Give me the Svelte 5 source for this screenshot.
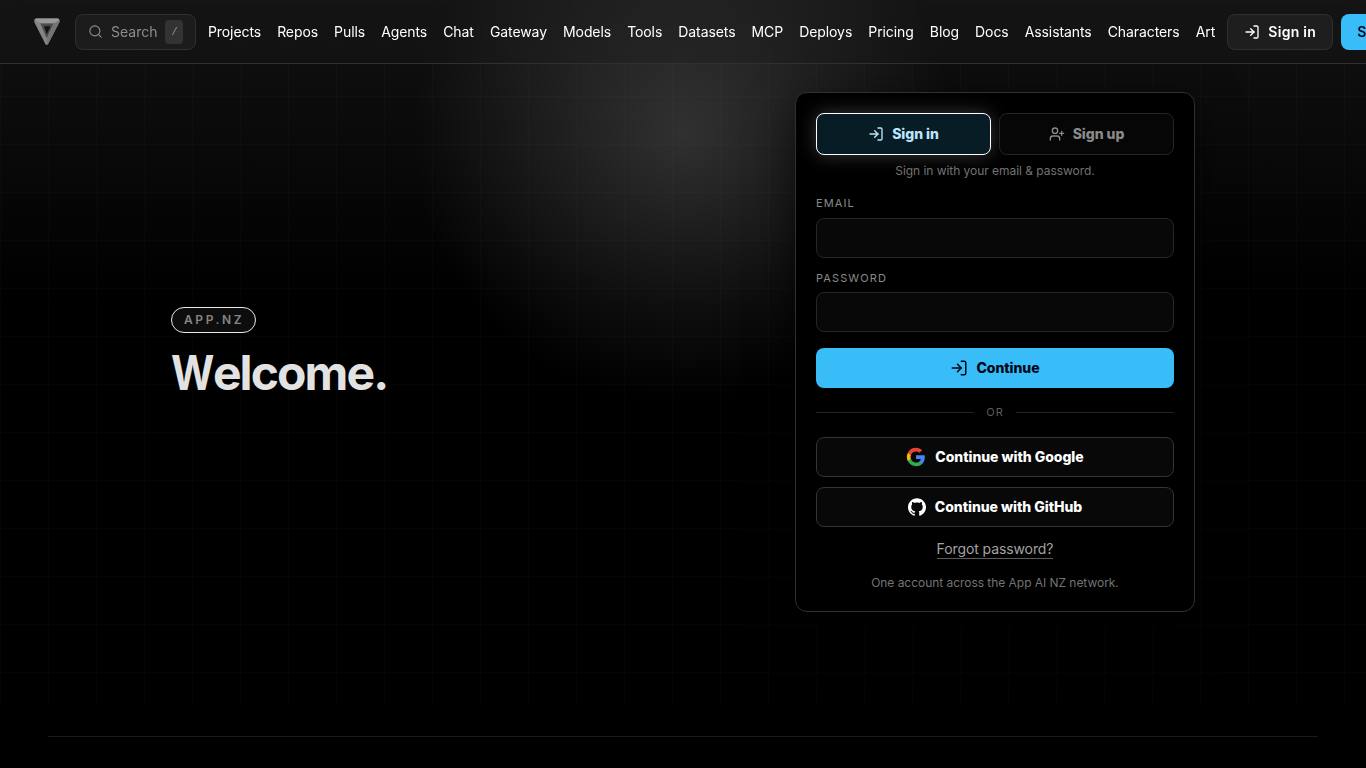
<script lang="ts">
  const links = [
    "Projects", "Repos", "Pulls", "Agents", "Chat", "Gateway", "Models", "Tools", "Datasets",
    "MCP", "Deploys", "Pricing", "Blog", "Docs", "Assistants", "Characters", "Art",
  ];

  let mode = $state<"in" | "up">("in");
  let email = $state("");
  let password = $state("");
</script>

{#snippet loginIcon(size: number)}
  <svg class="icon" width={size} height={size} viewBox="0 0 24 24" aria-hidden="true">
    <path d="M15 3h4a2 2 0 0 1 2 2v14a2 2 0 0 1-2 2h-4" />
    <path d="m10 17 5-5-5-5" />
    <path d="M15 12H3" />
  </svg>
{/snippet}

<div class="page">
  <header>
    <a class="logo" href="#home" aria-label="Home">
      <svg width="28" height="28" viewBox="0 0 28 28">
        <path d="M1.5 1.5 3 .5h22l2 2.5-12.3 23.8h-2L1.2 4z" fill="#858585" />
        <path d="M1.5 1.5 3 .5h22l1.6 1.2-5.4 3.4H7.2z" fill="#999" />
        <path d="m27 3-12.3 23.8-.9-5.3 7.2-16z" fill="#747474" />
        <path d="M7.4 5.5h13.2l-6.8 14.8z" fill="#4c4c4c" />
        <path d="M11 8.3h6.6l-3.8 8z" fill="#131313" />
      </svg>
    </a>
    <button class="search">
      <svg class="icon" width="15" height="15" viewBox="0 0 24 24" aria-hidden="true">
        <circle cx="11" cy="11" r="8" />
        <path d="m21 21-4.3-4.3" />
      </svg>
      <span>Search</span>
      <kbd>/</kbd>
    </button>
    <nav>
      {#each links as link}
        <a href={"#" + link.toLowerCase()}>{link}</a>
      {/each}
    </nav>
    <div class="account">
      <button class="btn ghost">{@render loginIcon(16)}Sign in</button>
      <button class="btn accent">Sign up</button>
    </div>
  </header>

  <main>
    <section class="intro">
      <span class="pill">APP.NZ</span>
      <h1><span class="initial">W</span>elcome.</h1>
    </section>

    <section class="card">
      <div class="tabs">
        <button class="tab" class:active={mode === "in"} onclick={() => (mode = "in")}>
          {@render loginIcon(16)}Sign in
        </button>
        <button class="tab" class:active={mode === "up"} onclick={() => (mode = "up")}>
          <svg class="icon" width="16" height="16" viewBox="0 0 24 24" aria-hidden="true">
            <path d="M16 21v-2a4 4 0 0 0-4-4H6a4 4 0 0 0-4 4v2" />
            <circle cx="9" cy="7" r="4" />
            <path d="M19 8v6M22 11h-6" />
          </svg>
          Sign up
        </button>
      </div>
      <p class="hint">Sign in with your email &amp; password.</p>

      <form onsubmit={(e) => e.preventDefault()}>
        <label>
          <span>Email</span>
          <input type="email" bind:value={email} />
        </label>
        <label>
          <span>Password</span>
          <input type="password" bind:value={password} />
        </label>
        <button class="submit">{@render loginIcon(18)}Continue</button>
      </form>

      <div class="divider"><span>OR</span></div>

      <div class="providers">
        <button class="provider">
          <svg width="20" height="20" viewBox="0 0 24 24" aria-hidden="true">
            <path fill="#4285F4" d="M22.56 12.25c0-.78-.07-1.53-.2-2.25H12v4.26h5.92a5.06 5.06 0 0 1-2.2 3.32v2.77h3.57c2.08-1.92 3.27-4.74 3.27-8.1z" />
            <path fill="#34A853" d="M12 23c2.97 0 5.46-.98 7.28-2.66l-3.57-2.77c-.98.66-2.23 1.06-3.71 1.06-2.86 0-5.29-1.93-6.16-4.53H2.18v2.84A11 11 0 0 0 12 23z" />
            <path fill="#FBBC05" d="M5.84 14.09A6.6 6.6 0 0 1 5.49 12c0-.73.13-1.43.35-2.09V7.07H2.18A11 11 0 0 0 1 12c0 1.78.43 3.45 1.18 4.93l3.66-2.84z" />
            <path fill="#EA4335" d="M12 5.38c1.62 0 3.06.56 4.21 1.64l3.15-3.15C17.45 2.09 14.97 1 12 1A11 11 0 0 0 2.18 7.07l3.66 2.84C6.71 7.31 9.14 5.38 12 5.38z" />
          </svg>
          Continue with Google
        </button>
        <button class="provider">
          <svg width="18" height="18" viewBox="0 0 24 24" aria-hidden="true">
            <path fill="currentColor" d="M12 .297c-6.63 0-12 5.373-12 12 0 5.303 3.438 9.8 8.205 11.385.6.113.82-.258.82-.577 0-.285-.01-1.04-.015-2.04-3.338.724-4.042-1.61-4.042-1.61C4.422 18.07 3.633 17.7 3.633 17.7c-1.087-.744.084-.729.084-.729 1.205.084 1.838 1.236 1.838 1.236 1.07 1.835 2.809 1.305 3.495.998.108-.776.417-1.305.76-1.605-2.665-.3-5.466-1.332-5.466-5.93 0-1.31.465-2.38 1.235-3.22-.135-.303-.54-1.523.105-3.176 0 0 1.005-.322 3.3 1.23.96-.267 1.98-.399 3-.405 1.02.006 2.04.138 3 .405 2.28-1.552 3.285-1.23 3.285-1.23.645 1.653.24 2.873.12 3.176.765.84 1.23 1.91 1.23 3.22 0 4.61-2.805 5.625-5.475 5.92.42.36.81 1.096.81 2.22 0 1.606-.015 2.896-.015 3.286 0 .315.21.69.825.57C20.565 22.092 24 17.592 24 12.297c0-6.627-5.373-12-12-12" />
          </svg>
          Continue with GitHub
        </button>
      </div>

      <a class="forgot" href="#forgot">Forgot password?</a>
      <p class="note">One account across the App AI NZ network.</p>
    </section>
  </main>

  <footer></footer>
</div>

<style>
  :global(body) {
    background: #000;
    overflow: hidden;
  }
  .page {
    height: 768px;
    box-sizing: border-box;
    overflow: hidden;
    display: flex;
    flex-direction: column;
    font-family: Inter, sans-serif;
    color: #fff;
    background:
      linear-gradient(#000, #000) 0 704px / 100% 64px no-repeat,
      linear-gradient(rgba(255, 255, 255, 0.014) 1px, transparent 1px) 0 0 / 48px 48px,
      linear-gradient(90deg, rgba(255, 255, 255, 0.014) 1px, transparent 1px) 0 0 / 48px 48px,
      radial-gradient(circle 270px at 683px 135px, rgba(255, 255, 255, 0.155), transparent),
      linear-gradient(#121212, #000 300px);
  }
  button,
  input {
    font: inherit;
    color: inherit;
    box-sizing: border-box;
  }
  button {
    cursor: pointer;
  }
  a {
    color: inherit;
    text-decoration: none;
  }
  .icon {
    fill: none;
    stroke: currentColor;
    stroke-width: 2;
    stroke-linecap: round;
    stroke-linejoin: round;
    flex-shrink: 0;
  }
  header {
    display: flex;
    align-items: center;
    flex: none;
    height: 64px;
    box-sizing: border-box;
    padding-left: 33px;
    border-bottom: 1px solid #303030;
    background: rgba(28, 28, 28, 0.3);
    backdrop-filter: blur(12px);
    white-space: nowrap;
  }
  .logo {
    display: flex;
    flex: none;
    margin-right: 14px;
  }
  .search {
    display: flex;
    align-items: center;
    flex: none;
    width: 121px;
    height: 36px;
    padding: 0 12px;
    border: 1px solid #303030;
    border-radius: 8px;
    background: #1c1c1c;
    color: #8d8d8d;
    font-size: 14px;
    gap: 8px;
  }
  .search .icon {
    stroke-width: 1.8;
  }
  kbd {
    display: grid;
    place-items: center;
    flex: none;
    width: 18px;
    height: 24px;
    border-radius: 4px;
    background: #333;
    font: 11px "Liberation Mono", monospace;
  }
  nav {
    display: flex;
    gap: 16.1px;
    margin: 0 12px;
    font-size: 14px;
    letter-spacing: -0.09px;
  }
  .account {
    display: flex;
    flex: none;
    gap: 8px;
  }
  .btn {
    display: flex;
    align-items: center;
    justify-content: center;
    gap: 8px;
    width: 106px;
    height: 36px;
    padding: 0 15px;
    border: 1px solid #303030;
    border-radius: 8px;
    background: #1e1e1e;
    font-size: 14px;
    font-weight: 600;
    letter-spacing: 0.25px;
  }
  .btn.accent {
    justify-content: flex-start;
    padding: 0 16px;
    border: 0;
    background: #38bdf8;
    color: #020617;
  }
  main {
    display: grid;
    grid-template-columns: 1fr 400px;
    align-items: center;
    flex: none;
    width: 1024px;
    height: 576px;
    margin: 0 auto;
    align-content: center;
  }
  .intro {
    padding-top: 1px;
  }
  .pill {
    display: inline-flex;
    align-items: center;
    height: 26px;
    box-sizing: border-box;
    padding: 0 10.5px 0 12px;
    border: 1px solid #e8e8e8;
    border-radius: 13px;
    background: #0d0d0d;
    color: #858585;
    font-size: 12px;
    font-weight: 600;
    letter-spacing: 2.6px;
  }
  h1 {
    margin: 14px 0 0;
    font-size: 48px;
    font-weight: 700;
    line-height: 52px;
    letter-spacing: -1.9px;
    color: #e2e2e2;
  }
  /* narrower capital than the rest of the face */
  .initial {
    display: inline-block;
    margin-right: -6px;
    transform: scaleX(0.87);
    transform-origin: left;
  }
  .card {
    box-sizing: border-box;
    height: 520px;
    padding: 20px;
    border: 1px solid #303030;
    border-radius: 12px;
    background: #000;
    box-shadow: 0 16px 48px rgba(0, 0, 0, 0.6);
  }
  .tabs {
    display: grid;
    grid-template-columns: 1fr 1fr;
    gap: 8px;
  }
  .tab,
  .submit,
  .provider {
    display: flex;
    align-items: center;
    justify-content: center;
    gap: 8px;
    padding: 0 6px 1px;
    border: 1px solid #242424;
    border-radius: 8px;
    font-size: 14px;
    font-weight: 800;
    letter-spacing: -0.04px;
  }
  .tab {
    height: 42px;
    background: #060606;
    color: #8a8a8a;
  }
  .tab.active {
    border-color: #fff;
    background: #081c26;
    color: #bae6fd;
    box-shadow: 0 0 18px rgba(255, 255, 255, 0.22);
  }
  .hint,
  .note {
    margin: 0;
    font-size: 12px;
    line-height: 18px;
    letter-spacing: -0.04px;
    text-align: center;
    color: #737373;
  }
  .hint {
    margin-top: 7px;
  }
  form {
    display: flex;
    flex-direction: column;
  }
  label {
    display: flex;
    flex-direction: column;
    margin-top: 15px;
  }
  label + label {
    margin-top: 12px;
  }
  label span {
    height: 17px;
    margin-bottom: 6px;
    font-size: 11px;
    line-height: 17px;
    letter-spacing: 1.1px;
    text-transform: uppercase;
    color: #8a8a8a;
  }
  label + label span {
    margin-bottom: 5px;
  }
  input {
    height: 40px;
    padding: 0 12px;
    border: 1px solid #262626;
    border-radius: 8px;
    background: #080808;
    outline: none;
  }
  .submit {
    height: 40px;
    margin-top: 16px;
    border: 0;
    background: #38bdf8;
    color: #020617;
  }
  .divider {
    display: flex;
    align-items: center;
    gap: 12px;
    height: 16px;
    margin: 16px 0 17px;
    font-size: 11px;
    letter-spacing: 0.9px;
    color: #5c5c5c;
  }
  .divider::before,
  .divider::after {
    content: "";
    flex: 1;
    height: 1px;
    background: #242424;
  }
  .providers {
    display: grid;
    gap: 10px;
  }
  .provider {
    height: 40px;
    gap: 9px;
    border-color: #343434;
    background: #080808;
  }
  .forgot {
    display: block;
    width: fit-content;
    margin: 13px auto 0;
    border-bottom: 1px solid #5a5a5a;
    font-size: 14px;
    line-height: 18px;
    letter-spacing: -0.1px;
    color: #a3a3a3;
  }
  .note {
    margin-top: 15px;
  }
  footer {
    flex: none;
    margin: 96px 48px 0;
    border-top: 1px solid #1b1b1b;
  }
</style>
